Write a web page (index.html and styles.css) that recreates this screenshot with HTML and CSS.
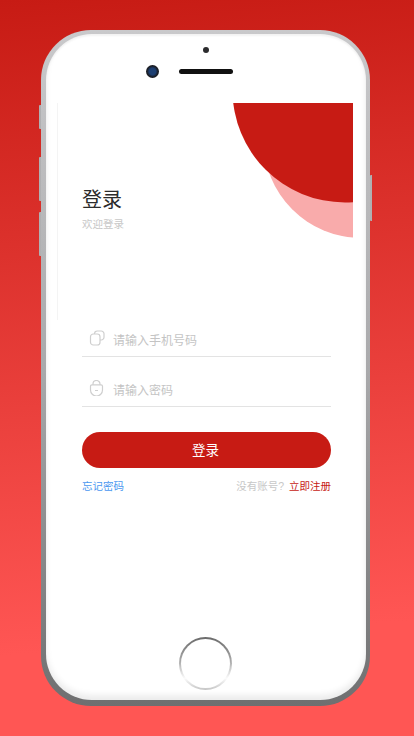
FILE: index.html
```html
<!DOCTYPE html>
<html lang="zh-CN">
<head>
<meta charset="utf-8">
<title>登录</title>
<link rel="stylesheet" href="styles.css">
</head>
<body>
<div class="phone">
  <span class="side side-mute"></span>
  <span class="side side-up"></span>
  <span class="side side-down"></span>
  <span class="side side-power"></span>
  <div class="screen">
    <div class="top-bezel">
      <span class="mic"></span>
      <div class="cam-row">
        <span class="camera"></span>
        <span class="speaker"></span>
      </div>
    </div>
    <main class="app">
      <svg class="decor" viewBox="0 0 296 140" aria-hidden="true">
        <circle class="decor-light" cx="304" cy="37.400" r="97.400"/>
        <circle class="decor-dark" cx="288" cy="-13" r="112.500"/>
      </svg>
      <header class="hero">
        <h1 class="title">登录</h1>
        <p class="subtitle">欢迎登录</p>
      </header>
      <form class="form">
        <label class="field">
          <svg class="icon" viewBox="0 0 16 16" aria-hidden="true">
            <path d="M5.500 4V3.800A2.800 2.800 0 0 1 8.300 1h3.900A2.800 2.800 0 0 1 15 3.800v3.400a2.800 2.800 0 0 1-2.800 2.800H11"/>
            <rect x="1.500" y="4" width="9.500" height="11" rx="2.800"/>
          </svg>
          <span class="placeholder">请输入手机号码</span>
        </label>
        <label class="field">
          <svg class="icon" viewBox="0 0 16 16" aria-hidden="true">
            <path d="M3 4.800h9A1.500 1.500 0 0 1 13.500 6.300V10a6 6 0 0 1-12 0V6.300A1.500 1.500 0 0 1 3 4.800z"/>
            <path d="M4 4.800V4a3.500 3.500 0 0 1 7 0v.8M6 10.500h3"/>
          </svg>
          <span class="placeholder">请输入密码</span>
        </label>
        <button class="submit" type="button">登录</button>
        <div class="links">
          <a class="forgot">忘记密码</a>
          <span class="signup"><span class="muted">没有账号?</span><a class="register">立即注册</a></span>
        </div>
      </form>
    </main>
    <div class="home-row"><span class="home"></span></div>
  </div>
</div>
</body>
</html>
```
FILE: styles.css
```css
* { box-sizing: border-box; }
html, body { margin: 0; height: 736px; overflow: hidden; }
body {
  background: linear-gradient(175deg, #c71b14 0%, #ff5654 85%);
  font-family: "Liberation Sans", "Noto Sans CJK SC", sans-serif;
  padding: 30px 44px 30px 41px;
}
.phone {
  position: relative;
  height: 676px;
  border-radius: 50px;
  padding: 4px 4px 6px 5px;
  background: linear-gradient(180deg, #c9c9cb 0%, #a9a9ab 50%, #6f6f70 100%);
}
.side {
  position: absolute;
  width: 2px;
  background: #b0b0b2;
  border-radius: 1px 0 0 1px;
}
.side-mute { left: -2px; top: 75px; height: 24px; }
.side-up { left: -2px; top: 127px; height: 44px; }
.side-down { left: -2px; top: 182px; height: 44px; }
.side-power { right: -2px; top: 145px; height: 46px; }
.screen {
  height: 100%;
  background: #fff;
  border-radius: 46px;
  display: flex;
  flex-direction: column;
  box-shadow: inset 0 -5px 6px rgba(0,0,0,.08), inset 0 2px 2px rgba(0,0,0,.05);
}
.top-bezel {
  height: 69px;
  display: flex;
  flex-direction: column;
  align-items: center;
  padding-top: 13px;
  flex: none;
}
.mic {
  width: 6px;
  height: 6px;
  border-radius: 50%;
  background: #2b2b2d;
  margin-left: -1px;
}
.cam-row {
  display: flex;
  align-items: center;
  gap: 20px;
  margin-top: 12px;
  margin-left: -33px;
}
.camera {
  width: 13px;
  height: 13px;
  border-radius: 50%;
  background: radial-gradient(circle, #1d3f72 0 35%, #1a1c22 60%);
}
.speaker {
  width: 54px;
  height: 5px;
  border-radius: 3px;
  background: #111;
}
.app {
  position: relative;
  flex: 1;
  margin: 0 13px 0 11px;
}
.app::before {
  content: "";
  position: absolute;
  left: 0;
  top: 0;
  height: 217px;
  width: 1px;
  background: #f4f4f4;
}
.decor {
  position: absolute;
  left: 0;
  top: 0;
  width: 296px;
  height: 140px;
}
.decor-dark { fill: #c71b14; }
.decor-light { fill: #f9abab; }
.hero { padding: 84px 0 0 25px; height: 217px; }
.title {
  margin: 0;
  font-size: 20px;
  line-height: 26px;
  font-weight: 400;
  color: #2b2b2b;
}
.subtitle {
  margin: 3px 0 0;
  font-size: 10.500px;
  line-height: 16px;
  color: #c8c8c8;
}
.form { padding: 0 22px 0 25px; }
.field {
  display: flex;
  align-items: center;
  height: 37px;
  border-bottom: 1px solid #e3e3e3;
  margin-bottom: 13px;
  padding-left: 7px;
  gap: 8px;
}
.icon {
  width: 16px;
  height: 16px;
  fill: none;
  stroke: #cfcfcf;
  stroke-width: 1.200;
}
.placeholder { font-size: 12px; color: #c4c4c4; padding-top: 2px; }
.submit {
  display: block;
  width: 100%;
  height: 36px;
  margin-top: 25px;
  padding: 0 2px 2px 0;
  border: 0;
  border-radius: 18px;
  background: #c71b14;
  color: #fff;
  font: 13.500px "Liberation Sans", "Noto Sans CJK SC", sans-serif;
}
.links {
  display: flex;
  justify-content: space-between;
  margin-top: 10px;
  font-size: 10.500px;
  line-height: 16px;
}
.signup { display: flex; gap: 5px; }
.forgot { color: #4a97f0; }
.muted { color: #c8c8c8; }
.register { color: #c71b14; }
.home-row {
  height: 63px;
  flex: none;
  display: flex;
  justify-content: center;
}
.home {
  position: relative;
  width: 53px;
  height: 53px;
  margin-left: -1px;
  border-radius: 50%;
  background: linear-gradient(180deg, #6a6a6a 0%, #a8a8a8 45%, #fbfbfb 78%, #c4c4c4 100%);
}
.home::after {
  content: "";
  position: absolute;
  inset: 2px;
  border-radius: 50%;
  background: #fff;
}
```
